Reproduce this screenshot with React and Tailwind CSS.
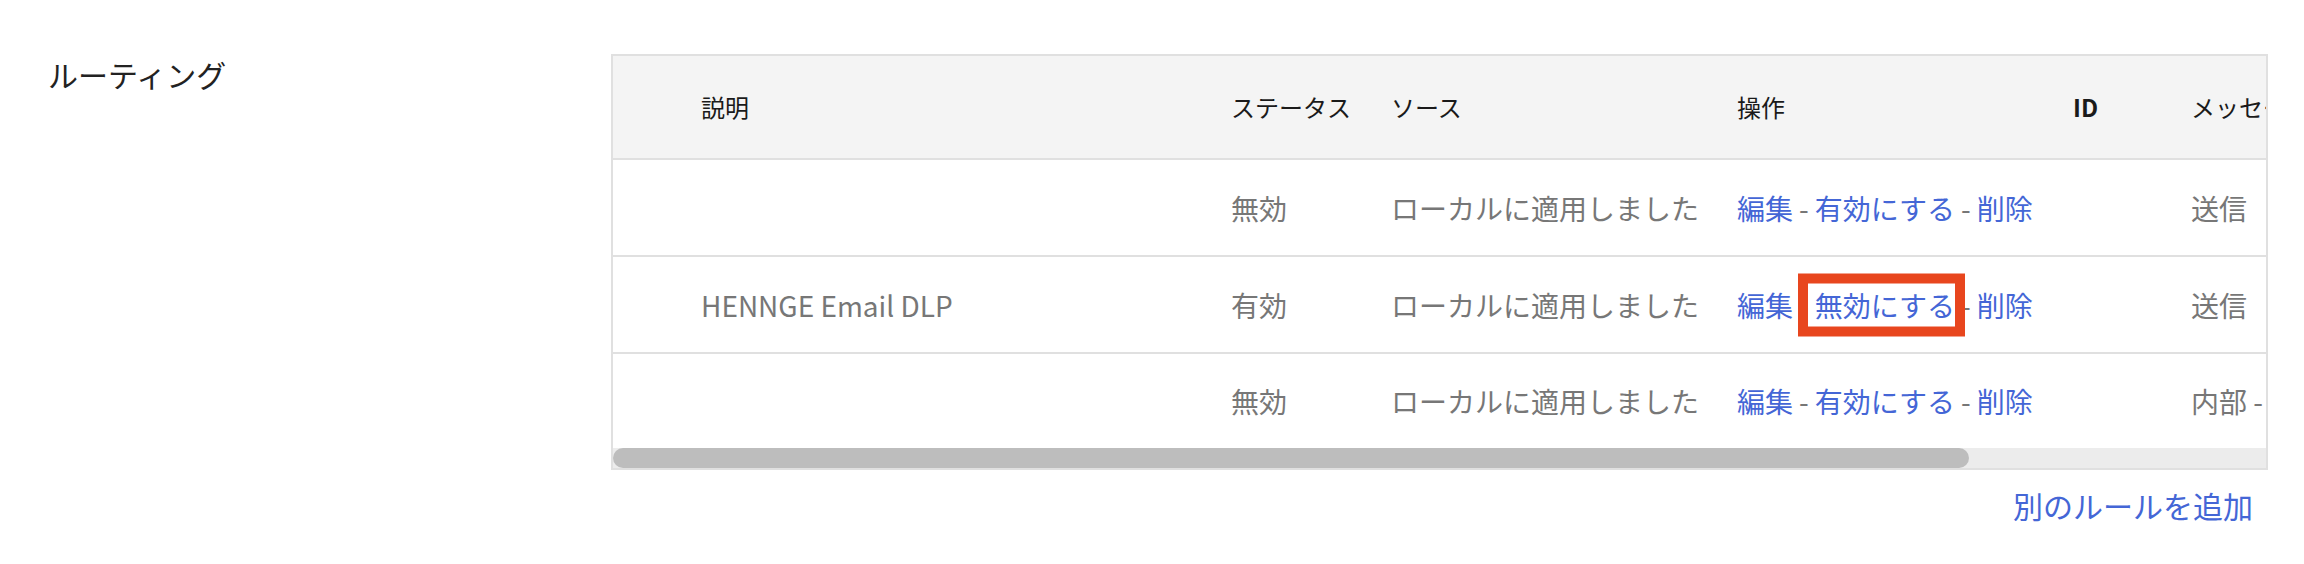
import React from 'react';

// 列幅（テーブル内側、px）
const COLS = [
  { key: 'desc', label: '説明', width: 'w-[618px] pl-[88px]' },
  { key: 'status', label: 'ステータス', width: 'w-[160px]' },
  { key: 'source', label: 'ソース', width: 'w-[346px]' },
  { key: 'ops', label: '操作', width: 'w-[336px]' },
  { key: 'id', label: 'ID', width: 'w-[118px]', bold: true },
  { key: 'msg', label: 'メッセージ', width: 'w-[200px]' },
];

const ROWS = [
  { desc: '', status: '無効', source: 'ローカルに適用しました', toggle: '有効にする', msg: '送信' },
  { desc: 'HENNGE Email DLP', status: '有効', source: 'ローカルに適用しました', toggle: '無効にする', msg: '送信', highlight: true },
  { desc: '', status: '無効', source: 'ローカルに適用しました', toggle: '有効にする', msg: '内部 - 送信' },
];

const Sep = () => <span className="mx-[6px] text-[#777777]">-</span>;

function Operations({ toggle, highlight }) {
  return (
    <span className="text-[#4466d6]">
      <a>編集</a>
      <Sep />
      <span className="relative">
        <a>{toggle}</a>
        {highlight && (
          <span className="absolute -left-[17px] -right-[10px] top-1/2 -translate-y-1/2 h-[63px] border-[10px] border-[#e8461e]"></span>
        )}
      </span>
      <Sep />
      <a>削除</a>
    </span>
  );
}

export default function App() {
  return (
    <div
      className="w-[2304px] h-[564px] bg-white flex pl-[48px] pt-[54px] overflow-hidden"
      style={{ fontFamily: '"Noto Sans CJK JP", "Noto Sans", sans-serif' }}
    >
      {/* セクション見出し */}
      <div className="w-[563px] shrink-0">
        <h2 className="text-[30px] leading-[40px] text-[#222222]">ルーティング</h2>
      </div>

      <div className="w-[1657px] shrink-0">
        <div className="border-2 border-[#e0e0e0] overflow-hidden">
          {/* ヘッダー */}
          <div className="h-[104px] bg-[#f4f4f4] border-b-2 border-[#e0e0e0] flex items-center whitespace-nowrap text-[24px] text-[#1a1a1a]">
            {COLS.map((c) => (
              <div key={c.key} className={`${c.width} shrink-0 ${c.bold ? 'font-bold' : ''}`}>
                {c.label}
              </div>
            ))}
          </div>

          {/* 行 */}
          {ROWS.map((r, i) => (
            <div
              key={i}
              className={`flex items-center whitespace-nowrap text-[28px] text-[#777777] ${
                i < ROWS.length - 1 ? 'h-[97px] border-b-2 border-[#e0e0e0]' : 'h-[94px]'
              }`}
            >
              <div className="w-[618px] pl-[88px] shrink-0">{r.desc}</div>
              <div className="w-[160px] shrink-0">{r.status}</div>
              <div className="w-[346px] shrink-0">{r.source}</div>
              <div className="w-[336px] shrink-0">
                <Operations toggle={r.toggle} highlight={r.highlight} />
              </div>
              <div className="w-[118px] shrink-0"></div>
              <div className="w-[200px] shrink-0">{r.msg}</div>
            </div>
          ))}

          {/* 横スクロールバー */}
          <div className="h-[20px] bg-[#ececec] flex">
            <div className="w-[1356px] h-full rounded-full bg-[#bdbdbd]"></div>
          </div>
        </div>

        <div className="flex justify-end pr-[15px] mt-[15px]">
          <a className="text-[30px] leading-[40px] text-[#4466d6]">別のルールを追加</a>
        </div>
      </div>
    </div>
  );
}
